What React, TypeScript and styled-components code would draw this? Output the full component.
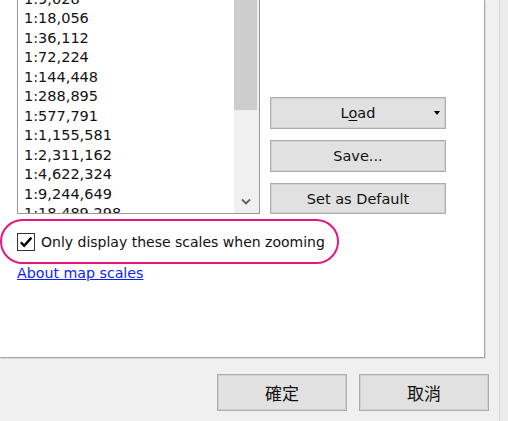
import React from 'react';
import styled, { createGlobalStyle } from 'styled-components';

const Global = createGlobalStyle`
  html, body { margin: 0; padding: 0; background: #f0f0f0; overflow: hidden; }
  body {
    font-family: "DejaVu Sans", Tahoma, "Noto Sans CJK TC", sans-serif;
    font-size: 14.5px;
    color: #000;
  }
`;

const Window = styled.div`
  display: flex;
  width: 508px;
  height: 421px;
`;

const Dialog = styled.div`
  width: 499px;
  display: flex;
  flex-direction: column;
  background: #f0f0f0;
`;

const Edge = styled.div`
  width: 1px;
  background: #d4d4d4;
`;

const Outside = styled.div`
  flex: 1;
  background: #ececec;
`;

const Panel = styled.div`
  width: 484px;
  height: 357px;
  background: #fff;
  border-right: 1px solid #a6a6a6;
  border-bottom: 1px solid #a6a6a6;
  box-shadow: 1px 1px 0 #dadada;
  display: flex;
  flex-direction: column;
`;

const TopRow = styled.div`
  display: flex;
  align-items: flex-end;
  gap: 10px;
  padding-left: 17px;
`;

const ListBox = styled.div`
  width: 241px;
  height: 213px;
  border: 1px solid #9a9a9a;
  border-top: none;
  display: flex;
  background: #fff;
`;

const Items = styled.div`
  flex: 1;
  overflow: hidden;
  padding-left: 6px;
`;

const ItemsInner = styled.div`
  margin-top: -10.25px;
`;

const Item = styled.div`
  height: 19.5px;
  line-height: 19.5px;
  white-space: nowrap;
  color: #111;
`;

const Scrollbar = styled.div`
  width: 25px;
  background: #f0f0f0;
  display: flex;
  flex-direction: column;
`;

const Thumb = styled.div`
  height: 110px;
  margin-right: 2px;
  background: #cdcdcd;
`;

const Track = styled.div`
  flex: 1;
`;

const ArrowBox = styled.div`
  height: 24px;
  display: flex;
  align-items: center;
  justify-content: center;
  padding-right: 2px;
`;

const SideButtons = styled.div`
  display: flex;
  flex-direction: column;
  gap: 11px;
`;

const Button = styled.div<{ $w: number; $h: number; $size?: number }>`
  box-sizing: border-box;
  width: ${p => p.$w}px;
  height: ${p => p.$h}px;
  background: #e1e1e1;
  border: 1px solid #adadad;
  box-shadow: inset 0 0 0 1px #d2d2d2;
  display: flex;
  align-items: center;
  justify-content: center;
  font-size: ${p => p.$size ?? 14.5}px;
  color: #111;
`;

const SplitButton = styled(Button)`
  display: grid;
  grid-template-columns: 1fr auto 1fr;
  align-items: center;
`;

const DropArrow = styled.span`
  justify-self: end;
  margin-right: 5px;
  width: 0;
  height: 0;
  border-left: 3.5px solid transparent;
  border-right: 3.5px solid transparent;
  border-top: 4px solid #000;
`;

const Key = styled.span`
  text-decoration: underline;
  text-underline-offset: 2px;
`;

const Annotated = styled.div`
  box-sizing: border-box;
  margin-top: 5px;
  width: 339px;
  height: 45px;
  border: 2px solid #e4177e;
  border-radius: 23px;
  display: flex;
  align-items: center;
  gap: 6px;
  padding-left: 15px;
`;

const CheckBox = styled.span`
  box-sizing: border-box;
  width: 18px;
  height: 18px;
  border: 1px solid #333;
  background: #fff;
  display: flex;
  align-items: center;
  justify-content: center;
`;

const CheckLabel = styled.span`
  white-space: nowrap;
  font-size: 14px;
  color: #111;
`;

const LinkRow = styled.div`
  padding-left: 17px;
  margin-top: 1px;
  line-height: 17px;
  font-size: 14.2px;
`;

const Link = styled.a`
  color: #0a1efc;
  text-decoration: underline;
  cursor: pointer;
`;

const Footer = styled.div`
  display: flex;
  justify-content: flex-end;
  gap: 12px;
  padding-top: 16px;
  padding-right: 10px;
`;

const scales = [
  '1:9,028', '1:18,056', '1:36,112', '1:72,224', '1:144,448', '1:288,895',
  '1:577,791', '1:1,155,581', '1:2,311,162', '1:4,622,324', '1:9,244,649',
  '1:18,489,298',
];

export default function App() {
  return (
    <>
      <Global />
      <Window>
        <Dialog>
          <Panel>
            <TopRow>
              <ListBox>
                <Items>
                  <ItemsInner>
                    {scales.map(s => <Item key={s}>{s}</Item>)}
                  </ItemsInner>
                </Items>
                <Scrollbar>
                  <Thumb />
                  <Track />
                  <ArrowBox>
                    <svg width="10" height="7" viewBox="0 0 10 7">
                      <path d="M1 1.5 L5 5.5 L9 1.5" fill="none" stroke="#606060" strokeWidth="1.8" />
                    </svg>
                  </ArrowBox>
                </Scrollbar>
              </ListBox>
              <SideButtons>
                <SplitButton $w={176} $h={32}>
                  <span />
                  <span>L<Key>o</Key>ad</span>
                  <DropArrow />
                </SplitButton>
                <Button $w={176} $h={32}>Save...</Button>
                <Button $w={176} $h={31}>Set as Default</Button>
              </SideButtons>
            </TopRow>
            <Annotated>
              <CheckBox>
                <svg width="14" height="14" viewBox="0 0 14 14">
                  <path d="M1.8 7.2 L5.2 10.8 L12.4 2.6" fill="none" stroke="#000" strokeWidth="2.4" />
                </svg>
              </CheckBox>
              <CheckLabel>Only display these scales when zooming</CheckLabel>
            </Annotated>
            <LinkRow>
              <Link>About map scales</Link>
            </LinkRow>
          </Panel>
          <Footer>
            <Button $w={130} $h={37} $size={17}>確定</Button>
            <Button $w={130} $h={37} $size={17}>取消</Button>
          </Footer>
        </Dialog>
        <Edge />
        <Outside />
      </Window>
    </>
  );
}
